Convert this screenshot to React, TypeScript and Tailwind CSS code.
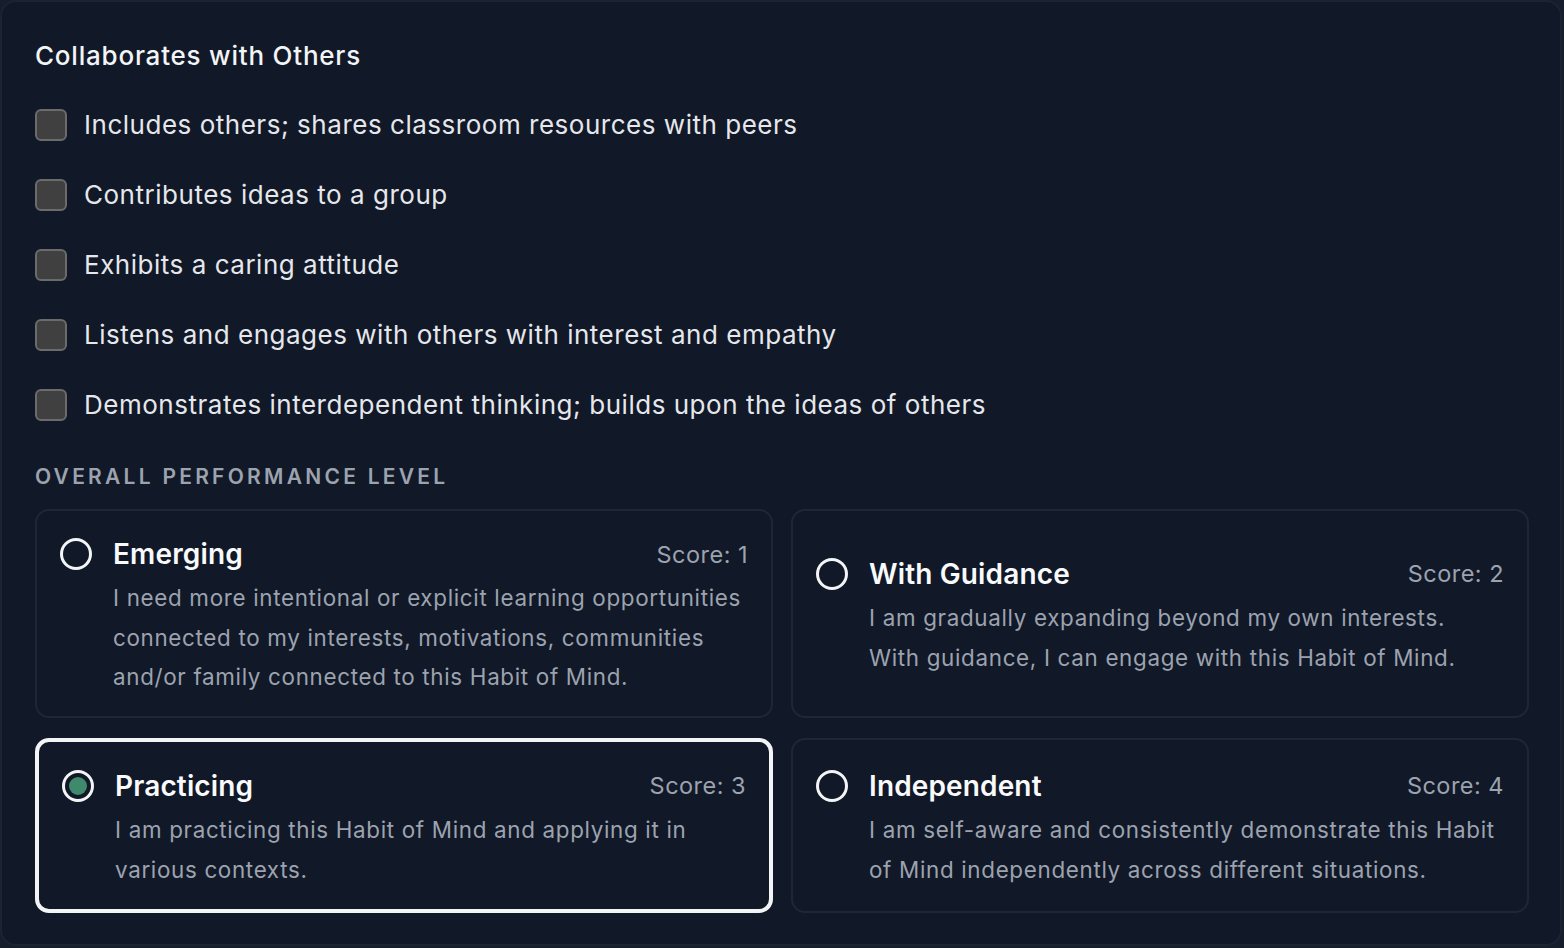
import React from "react";

const criteria = [
  "Includes others; shares classroom resources with peers",
  "Contributes ideas to a group",
  "Exhibits a caring attitude",
  "Listens and engages with others with interest and empathy",
  "Demonstrates interdependent thinking; builds upon the ideas of others",
];

const levels = [
  {
    title: "Emerging",
    score: 1,
    lines: [
      "I need more intentional or explicit learning opportunities",
      "connected to my interests, motivations, communities",
      "and/or family connected to this Habit of Mind.",
    ],
  },
  {
    title: "With Guidance",
    score: 2,
    lines: ["I am gradually expanding beyond my own interests.", "With guidance, I can engage with this Habit of Mind."],
  },
  {
    title: "Practicing",
    score: 3,
    lines: ["I am practicing this Habit of Mind and applying it in", "various contexts."],
  },
  {
    title: "Independent",
    score: 4,
    lines: [
      "I am self-aware and consistently demonstrate this Habit",
      "of Mind independently across different situations.",
    ],
  },
];

const Radio: React.FC<{ checked: boolean }> = ({ checked }) => (
  <div className="h-9 flex items-center shrink-0">
    <div className="w-8 h-8 rounded-full border-[3.5px] border-[#f3f4f6] flex items-center justify-center">
      {checked && <div className="w-[18px] h-[18px] rounded-full bg-[#3f8a6c]" />}
    </div>
  </div>
);

export default function App() {
  const selected = 3;
  return (
    <div
      className="w-[1564px] h-[948px] bg-[#161d2b]"
      style={{ fontFamily: "Inter, 'Noto Sans', sans-serif" }}
    >
      <div className="h-[946px] w-[1562px] bg-[#111827] border-2 border-[#1c2433] rounded-2xl pl-[33px] pr-[31px] pt-[36px]">
        <h2 className="text-[26px] leading-9 font-medium tracking-[0.03em] text-[#f3f4f6]">Collaborates with Others</h2>

        <div className="mt-[33px] flex flex-col gap-[34px]">
          {criteria.map((c) => (
            <label key={c} className="flex items-center gap-[17px] h-9">
              <span className="w-8 h-8 rounded-[6px] bg-[#404040] border-2 border-[#6b6b6b] shrink-0" />
              <span className="text-[26px] text-[#e5e7eb] leading-9 tracking-[0.02em]">{c}</span>
            </label>
          ))}
        </div>

        <div className="mt-[38px] text-[21px] font-semibold tracking-[0.155em] text-[#9ca3af] leading-8">
          OVERALL PERFORMANCE LEVEL
        </div>

        <div className="mt-4 grid grid-cols-2 gap-x-[18px] gap-y-5 grid-rows-[209px_175px]">
          {levels.map((l) => {
            const on = l.score === selected;
            return (
              <div
                key={l.title}
                className={
                  on
                    ? "rounded-[14px] border-4 border-[#f3f4f6] px-[23px] pt-[26px] pb-[20px] flex flex-col justify-center"
                    : "rounded-[14px] border-2 border-[#1e2737] px-[23px] pt-[26px] pb-[20px] flex flex-col justify-center"
                }
              >
                <div className="flex gap-[21px] items-start">
                  <Radio checked={on} />
                  <div className="flex-1 min-w-0">
                    <div className="flex items-center justify-between h-9">
                      <span className="text-[28px] font-semibold tracking-[0.005em] text-[#f9fafb]">{l.title}</span>
                      <span className="text-[23.5px] tracking-[0.02em] text-[#9ca3af]">Score: {l.score}</span>
                    </div>
                    <p className="mt-[6px] text-[22.4px] leading-[39.5px] text-[#9ca3af] tracking-[0.03em] whitespace-nowrap">
                      {l.lines.map((line, i) => (
                        <React.Fragment key={i}>
                          {i > 0 && <br />}
                          {line}
                        </React.Fragment>
                      ))}
                    </p>
                  </div>
                </div>
              </div>
            );
          })}
        </div>
      </div>
    </div>
  );
}
